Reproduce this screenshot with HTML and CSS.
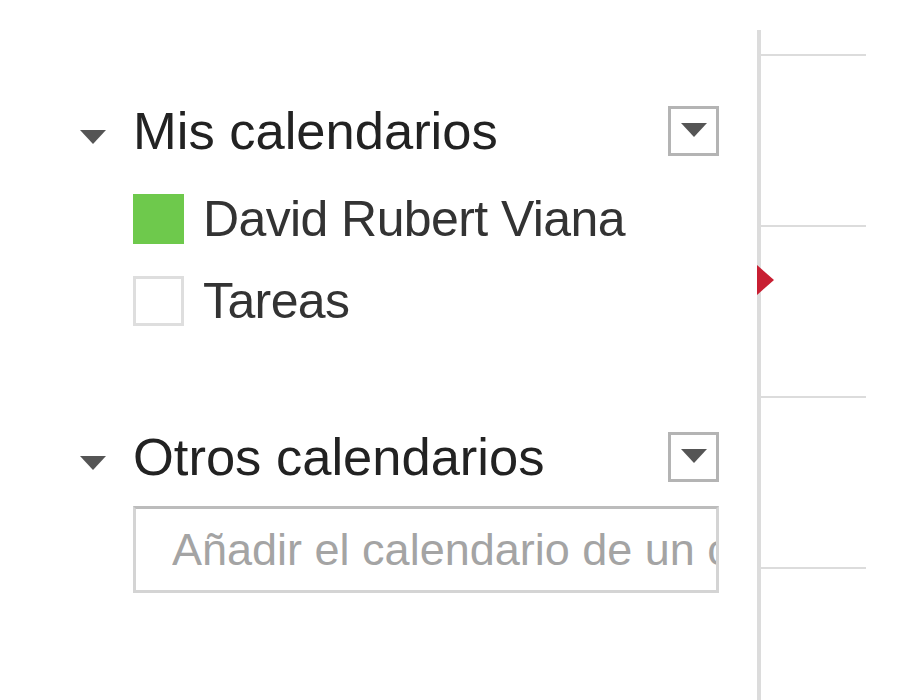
FILE: index.html
```html
<!DOCTYPE html>
<html lang="es">
<head>
<meta charset="utf-8">
<title>Calendarios</title>
<link rel="stylesheet" href="styles.css">
</head>
<body>
<div class="page">
  <aside class="sidebar">
    <section class="group group-mine">
      <div class="group-head">
        <span class="caret"></span>
        <span class="group-title">Mis calendarios</span>
        <span class="menu-btn"><span class="menu-caret"></span></span>
      </div>
      <ul class="cal-list">
        <li class="cal-item"><span class="swatch swatch-green"></span><span class="cal-name">David Rubert Viana</span></li>
        <li class="cal-item"><span class="swatch swatch-empty"></span><span class="cal-name">Tareas</span></li>
      </ul>
    </section>
    <section class="group group-other">
      <div class="group-head">
        <span class="caret"></span>
        <span class="group-title">Otros calendarios</span>
        <span class="menu-btn"><span class="menu-caret"></span></span>
      </div>
      <input class="add-input" type="text" placeholder="Añadir el calendario de un contacto">
    </section>
  </aside>
  <main class="grid">
    <div class="grid-row grid-row-first"></div>
    <div class="grid-row"></div>
    <div class="grid-row"></div>
    <div class="grid-row"></div>
    <span class="now-marker"></span>
  </main>
</div>
</body>
</html>
```

FILE: styles.css
```css
html, body {
  margin: 0;
  padding: 0;
  background: #ffffff;
}

body {
  font-family: "Liberation Sans", Arial, sans-serif;
  width: 900px;
  height: 700px;
  overflow: hidden;
}

.page {
  display: flex;
  align-items: flex-start;
  height: 700px;
}

.sidebar {
  flex: 0 0 757px;
  box-sizing: border-box;
  padding: 106px 38px 0 80px;
}

.group-head {
  display: flex;
  align-items: center;
  height: 50px;
}

.caret {
  width: 0;
  height: 0;
  border-left: 13px solid transparent;
  border-right: 13px solid transparent;
  border-top: 14px solid #555555;
  margin-top: 12px;
  margin-right: 27px;
}

.group-title {
  flex: 1;
  font-size: 52.5px;
  line-height: 50px;
  color: #222222;
  white-space: nowrap;
}

.menu-btn {
  box-sizing: border-box;
  width: 51px;
  height: 50px;
  border: 3px solid #b4b4b4;
  display: flex;
  align-items: center;
  justify-content: center;
}

.menu-caret {
  width: 0;
  height: 0;
  border-left: 13px solid transparent;
  border-right: 13px solid transparent;
  border-top: 14px solid #555555;
  margin-top: -2px;
}

.cal-list {
  list-style: none;
  margin: 38px 0 0 53px;
  padding: 0;
  display: flex;
  flex-direction: column;
  gap: 32px;
}

.cal-item {
  display: flex;
  align-items: center;
  height: 50px;
}

.swatch {
  box-sizing: border-box;
  width: 51px;
  height: 50px;
  margin-right: 19px;
}

.swatch-green {
  background: #6ec94c;
}

.swatch-empty {
  background: #ffffff;
  border: 3px solid #dedede;
}

.cal-name {
  font-size: 50px;
  line-height: 50px;
  letter-spacing: -0.6px;
  color: #333333;
  white-space: nowrap;
}

.group-other {
  margin-top: 106px;
}

.add-input {
  display: block;
  box-sizing: border-box;
  width: 586px;
  height: 87px;
  margin: 24px 0 0 53px;
  padding: 0 0 0 36px;
  border: 3px solid #d4d4d4;
  border-top-color: #bcbcbc;
  border-radius: 0;
  background: #ffffff;
  font-family: "Liberation Sans", Arial, sans-serif;
  font-size: 45px;
  color: #333333;
  outline: none;
}

.add-input::placeholder {
  color: #a4a4a4;
  opacity: 1;
}

.grid {
  position: relative;
  flex: 0 0 109px;
  box-sizing: border-box;
  margin-top: 30px;
  height: 670px;
  border-left: 4px solid #dcdcdc;
  display: flex;
  flex-direction: column;
}

.grid-row {
  flex: 0 0 auto;
  height: 169px;
  border-bottom: 2px solid #dcdcdc;
}

.grid-row-first {
  height: 24px;
}

.now-marker {
  position: absolute;
  left: -4px;
  top: 235px;
  width: 0;
  height: 0;
  border-top: 15px solid transparent;
  border-bottom: 15px solid transparent;
  border-left: 17px solid #c81f32;
}
```
